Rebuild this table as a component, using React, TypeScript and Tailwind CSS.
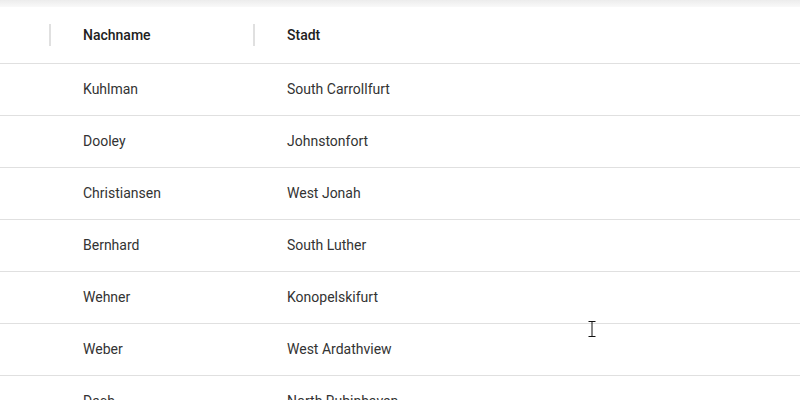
const rows = [
  { last: "Kuhlman", city: "South Carrollfurt" },
  { last: "Dooley", city: "Johnstonfort" },
  { last: "Christiansen", city: "West Jonah" },
  { last: "Bernhard", city: "South Luther" },
  { last: "Wehner", city: "Konopelskifurt" },
  { last: "Weber", city: "West Ardathview" },
  { last: "Dach", city: "North Rubinhaven" },
]

export default function App() {
  return (
    <div
      className="relative h-[400px] w-[800px] overflow-hidden bg-white text-[14px]"
      style={{ fontFamily: "Roboto, 'Liberation Sans', sans-serif" }}
    >
      <div className="h-[7px] bg-gradient-to-b from-[#ececec] to-[#f9f9f9]" />

      {/* header */}
      <div className="flex h-[57px] items-center border-b border-[#e0e0e0] font-medium text-[#212121]">
        <div className="w-[49px]" />
        <div className="h-[22px] w-[2px] bg-[#e0e0e0]" />
        <div className="w-[202px] pl-[32px]">Nachname</div>
        <div className="h-[22px] w-[2px] bg-[#e0e0e0]" />
        <div className="pl-[32px]">Stadt</div>
      </div>

      {/* rows */}
      {rows.map((r) => (
        <div key={r.last} className="flex h-[52px] items-center border-b border-[#e0e0e0] text-[#333333]">
          <div className="w-[51px]" />
          <div className="w-[204px] pl-[32px]">{r.last}</div>
          <div className="pl-[32px]">{r.city}</div>
        </div>
      ))}

      {/* text cursor */}
      <svg className="absolute left-[588px] top-[321px]" width="8" height="16" viewBox="0 0 8 16">
        <path d="M0.5 0.5h7M0.5 15.5h7M4 0.5v15" stroke="#111" strokeWidth="1" fill="none" />
      </svg>
    </div>
  )
}
